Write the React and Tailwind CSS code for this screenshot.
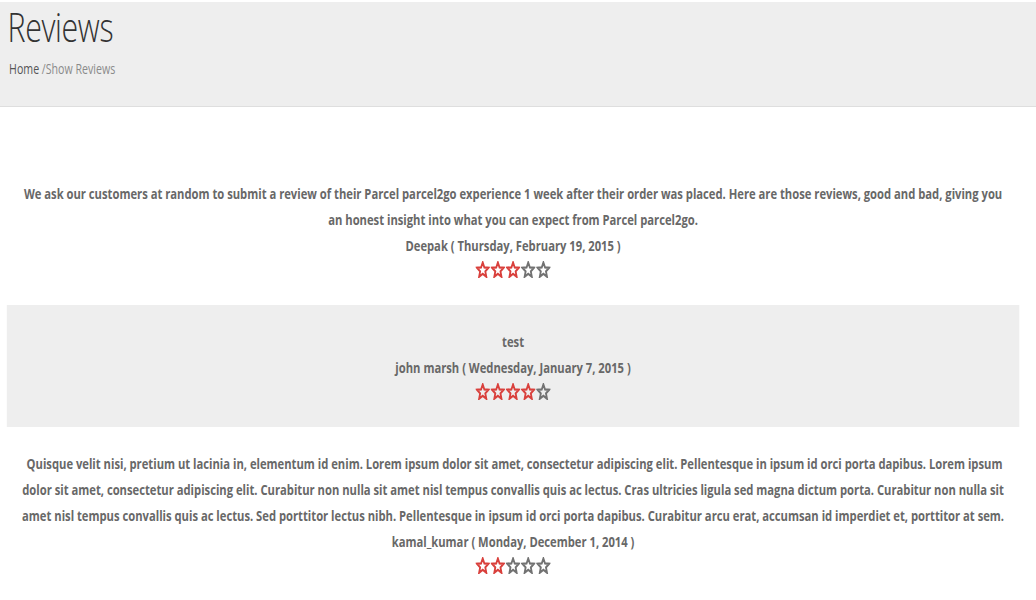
import React from "react";

const Star = ({ filled }) => (
  <svg
    width="19"
    height="17"
    viewBox="0 0 24 23"
    fill="none"
    stroke="currentColor"
    strokeWidth="3.2"
    strokeLinejoin="miter"
    className={filled ? "text-[#d9403c]" : "text-[#727272]"}
  >
    <polygon points="12,2 14.9,8.7 22.2,9.2 16.6,14 18.4,21.2 12,17.3 5.6,21.2 7.4,14 1.8,9.2 9.1,8.7" />
  </svg>
);

const Stars = ({ n }) => (
  <div className="flex justify-center h-[22px] items-center gap-[1px]">
    {[0, 1, 2, 3, 4].map((i) => (
      <Star key={i} filled={i < n} />
    ))}
  </div>
);

const reviews = [
  {
    text: "We ask our customers at random to submit a review of their Parcel parcel2go experience 1 week after their order was placed. Here are those reviews, good and bad, giving you an honest insight into what you can expect from Parcel parcel2go.",
    by: "Deepak ( Thursday, February 19, 2015 )",
    stars: 3,
    gray: false,
  },
  {
    text: "test",
    by: "john marsh ( Wednesday, January 7, 2015 )",
    stars: 4,
    gray: true,
  },
  {
    text: "\u00a0Quisque velit nisi, pretium ut lacinia in, elementum id enim. Lorem ipsum dolor sit amet, consectetur adipiscing elit. Pellentesque in ipsum id orci porta dapibus. Lorem ipsum dolor sit amet, consectetur adipiscing elit. Curabitur non nulla sit amet nisl tempus convallis quis ac lectus. Cras ultricies ligula sed magna dictum porta. Curabitur non nulla sit amet nisl tempus convallis quis ac lectus. Sed porttitor lectus nibh. Pellentesque in ipsum id orci porta dapibus. Curabitur arcu erat, accumsan id imperdiet et, porttitor at sem.",
    by: "kamal_kumar ( Monday, December 1, 2014 )",
    stars: 2,
    gray: false,
  },
];

export default function App() {
  return (
    <div className="w-[1036px] h-[600px] overflow-hidden bg-white">
      <div className="w-[1366px] origin-top-left scale-x-[0.7584] font-['Open_Sans',sans-serif] pt-[2px]">
        <header className="bg-[#eeeeee] border-b border-[#dedede] h-[105px] pl-[10px] pt-[2px]">
          <h1 className="text-[40px] leading-[46px] font-light text-[#333333] tracking-[-0.5px]">
            Reviews
          </h1>
          <div className="mt-[9px] text-[14px] leading-[20px] pl-[2px]">
            <span className="text-[#555555]">Home</span>
            <span className="text-[#8a8a8a]"> /Show Reviews</span>
          </div>
        </header>
        <main className="w-[1353px] px-[9px] mt-[50px]">
          {reviews.map((r, i) => (
            <div
              key={i}
              className={`${r.gray ? "bg-[#eeeeee]" : "bg-white"} pt-[23px] pb-[25px] px-[12px] text-center text-[14.8px] font-bold text-[#686868] leading-[26px]`}
            >
              <p>{r.text}</p>
              <p>{r.by}</p>
              <Stars n={r.stars} />
            </div>
          ))}
        </main>
      </div>
    </div>
  );
}
